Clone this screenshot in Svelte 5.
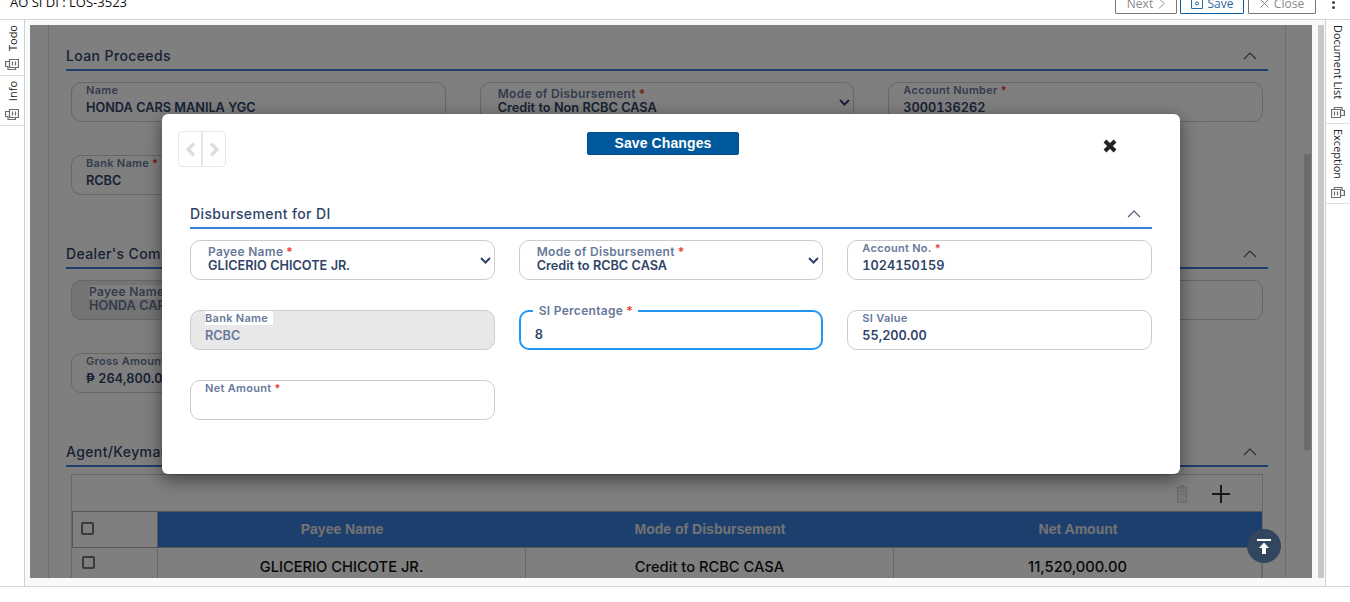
<script lang="ts">
  const loan = [
    { label: "Name", value: "HONDA CARS MANILA YGC" },
    { label: "Mode of Disbursement", value: "Credit to Non RCBC CASA", req: true, select: true },
    { label: "Account Number", value: "3000136262", req: true },
    { label: "Bank Name", value: "RCBC", req: true },
  ];
  const dealer = [
    { label: "Payee Name", value: "HONDA CARS MANILA YGC", req: true, select: true, disabled: true },
    { label: "Mode of Disbursement", value: "Credit to Non RCBC CASA", req: true, select: true },
    { label: "Account Number", value: "3000136262", req: true },
    { label: "Gross Amount", value: "₱ 264,800.00", req: true },
  ];
  const fields = [
    { label: "Payee Name", value: "GLICERIO CHICOTE JR.", req: true, select: true },
    { label: "Mode of Disbursement", value: "Credit to RCBC CASA", req: true, select: true },
    { label: "Account No.", value: "1024150159", req: true },
    { label: "Bank Name", value: "RCBC", disabled: true },
    { label: "SI Percentage", value: "8", req: true, focused: true },
    { label: "SI Value", value: "55,200.00" },
    { label: "Net Amount", value: "", req: true },
  ];
</script>

{#snippet docs()}
  <svg class="doc" width="14" height="13" viewBox="0 0 14 13" fill="none" stroke="currentColor" stroke-width="1.200">
    <path d="M4.500 1.500h9v8h-9z" />
    <path d="M7.500 3.500v4M10.500 3.500v4" />
    <path d="M4 3.500H.6v5H3v3h7.500v-2" />
  </svg>
{/snippet}

{#snippet chevron()}
  <svg class="collapse" width="14" height="8" viewBox="0 0 14 8" fill="none" stroke="currentColor" stroke-width="1.100">
    <path d="M1 7l6-6 6 6" />
  </svg>
{/snippet}

{#snippet field(f)}
  <div class="field" class:select={f.select} class:disabled={f.disabled} class:focused={f.focused}>
    <span class="label">{f.label}{#if f.req}<i>*</i>{/if}</span>
    <span class="value">{f.value}</span>
    {#if f.select}
      <svg class="caret" width="11" height="7" viewBox="0 0 11 7" fill="none" stroke="currentColor" stroke-width="2">
        <path d="M1 1l4.500 4.500L10 1" />
      </svg>
    {/if}
  </div>
{/snippet}

<div class="page">
  <header class="topbar">
    <h1>AO SI DI : LOS-3523</h1>
    <div class="actions">
      <button class="next">Next
        <svg width="7" height="11" viewBox="0 0 7 11" fill="none" stroke="currentColor"><path d="M1 .5l5 5-5 5" /></svg>
      </button>
      <button class="save">
        <svg width="12" height="12" viewBox="0 0 12 12" fill="none" stroke="currentColor">
          <path d="M.5.5h11v11H.5z" /><circle cx="6" cy="6.500" r="1.500" /><path d="M3.500.5v2h5v-2" />
        </svg>
        Save
      </button>
      <button class="close">
        <svg width="9" height="9" viewBox="0 0 9 9" fill="none" stroke="currentColor"><path d="M.5.5l8 8M8.500.5l-8 8" /></svg>
        Close
      </button>
      <span class="kebab"><b></b><b></b></span>
    </div>
  </header>

  <div class="body">
    <nav class="rail left">
      <div class="tab">
        <span>Todo</span>
        {@render docs()}
      </div>
      <div class="tab">
        <span>Info</span>
        {@render docs()}
      </div>
    </nav>

    <main class="main">
      <div class="viewport">
        <div class="card">
          <section>
            <div class="title"><h2>Loan Proceeds</h2>{@render chevron()}</div>
            <div class="grid">
              {#each loan as f}{@render field(f)}{/each}
            </div>
          </section>
          <section>
            <div class="title"><h2>Dealer's Commission</h2>{@render chevron()}</div>
            <div class="grid">
              {#each dealer as f}{@render field(f)}{/each}
            </div>
          </section>
          <section>
            <div class="title"><h2>Agent/Keyman</h2>{@render chevron()}</div>
            <div class="table">
              <div class="tools">
                <svg class="trash" width="12" height="18" viewBox="0 0 14 19" preserveAspectRatio="none" fill="currentColor">
                  <path d="M4.500 0h5v2H14v2H0V2h4.500zM1 5h12v14H1zM3.500 7v10h1.500V7zm2.750 0v10h1.500V7zm2.750 0v10h1.500V7z" fill-rule="evenodd" />
                </svg>
                <svg class="plus" width="18" height="18" viewBox="0 0 18 18" stroke="currentColor" stroke-width="2">
                  <path d="M9 0v18M0 9h18" />
                </svg>
              </div>
              <div class="row head">
                <div class="check"><span class="box"></span></div>
                <div>Payee Name</div>
                <div>Mode of Disbursement</div>
                <div>Net Amount</div>
              </div>
              <div class="row item">
                <div class="check"><span class="box"></span></div>
                <div>GLICERIO CHICOTE JR.</div>
                <div>Credit to RCBC CASA</div>
                <div>11,520,000.00</div>
              </div>
            </div>
          </section>
        </div>
      </div>
      <div class="scrollthumb"></div>

      <div class="backdrop">
        <div class="modal">
          <div class="modal-head">
            <div class="pager">
              <button aria-label="Previous">
                <svg width="11" height="15" viewBox="0 0 11 15" fill="none" stroke="currentColor" stroke-width="3.500"><path d="M9 1.500l-6 6 6 6" /></svg>
              </button>
              <button aria-label="Next">
                <svg width="11" height="15" viewBox="0 0 11 15" fill="none" stroke="currentColor" stroke-width="3.500"><path d="M2 1.500l6 6-6 6" /></svg>
              </button>
            </div>
            <button class="primary">Save Changes</button>
            <svg class="dismiss" width="14" height="14" viewBox="0 0 14 14" stroke="currentColor" stroke-width="4">
              <path d="M2 2l10 10M12 2L2 12" />
            </svg>
          </div>
          <div class="title modal-title"><h2>Disbursement for DI</h2>{@render chevron()}</div>
          <div class="grid modal-grid">
            {#each fields as f}{@render field(f)}{/each}
          </div>
        </div>
      </div>

      <button class="totop" aria-label="Back to top">
        <svg width="14" height="15" viewBox="0 0 14 15" fill="#fff">
          <path d="M0 0h14v2H0zM7 3.500l5 5.500H9v6H5V9H2z" />
        </svg>
      </button>
    </main>

    <div class="gutter"><div class="thumb"></div></div>

    <nav class="rail right">
      <div class="tab">
        <span>Document List</span>
        {@render docs()}
      </div>
      <div class="tab">
        <span>Exception</span>
        {@render docs()}
      </div>
    </nav>
  </div>
</div>

<style>
  :global(body) {
    margin: 0;
    background: #fff;
    overflow: hidden;
  }
  .page {
    height: 602px;
    font-family: Inter, "Liberation Sans", sans-serif;
    color: #2f4468;
  }
  button {
    font-family: inherit;
    background: none;
    padding: 0;
  }

  .topbar {
    height: 19px;
    border-bottom: 1px solid #d4d4d4;
    display: flex;
    justify-content: space-between;
    align-items: flex-end;
    padding: 0 0 0 10px;
    overflow: hidden;
  }
  h1 {
    margin: 0 0 7px;
    font: 400 13px/20px "Open Sans", sans-serif;
    color: #111;
  }
  .actions {
    display: flex;
    align-items: flex-end;
    margin-bottom: 5px;
  }
  .actions button {
    height: 22px;
    display: flex;
    align-items: center;
    justify-content: center;
    gap: 5px;
    border: 1px solid #777;
    border-radius: 1px;
    font: 400 12px "Open Sans", sans-serif;
    color: #8a8a8a;
  }
  .next { width: 62px; }
  .actions .save { width: 64px; margin-left: 3px; border-color: #0b5c9e; color: #2a6a9f; }
  .actions .close { width: 68px; margin-left: 4px; color: #888; }
  .kebab {
    width: 34px;
    display: flex;
    flex-direction: column;
    align-items: center;
    gap: 2px;
    margin-bottom: 5px;
  }
  .kebab b {
    width: 3px;
    height: 3px;
    border-radius: 50%;
    background: #444;
  }

  .body {
    display: flex;
    height: 566px;
    border-bottom: 1px solid #d4d4d4;
    background: #f8f9fb;
  }
  .rail {
    width: 24px;
    flex: none;
    background: #fff;
  }
  .rail.left { border-right: 1px solid #d0d0d0; }
  .rail.right { width: 24px; border-left: 1px solid #d0d0d0; }
  .tab {
    display: flex;
    flex-direction: column;
    align-items: center;
    gap: 7px;
    padding: 5px 0 4px;
    border-bottom: 1px solid #ddd;
    font: 400 11px "Open Sans", sans-serif;
    color: #222;
  }
  .tab span { writing-mode: vertical-rl; }
  .left .tab span { transform: rotate(180deg); }
  .doc { color: #6d6d6d; }
  .right .doc { transform: rotate(180deg); }

  .main {
    position: relative;
    flex: none;
    width: 1282px;
    margin: 5px 0 8px 5px;
    overflow: hidden;
  }
  .viewport {
    height: 100%;
    overflow: hidden;
    padding: 0 0 0 18px;
    background: #fff;
  }
  .card {
    width: 1202px;
    height: 100%;
    padding: 0 17px;
    border: solid #d8d8d8;
    border-width: 0 1px;
  }
  .scrollthumb {
    position: absolute;
    left: 1274px;
    top: 129px;
    width: 7px;
    height: 296px;
    background: #d6d6d6;
  }
  .gutter {
    width: 13px;
    flex: none;
    padding: 5px 1px 8px 6px;
    box-sizing: border-box;
  }
  .thumb {
    height: 100%;
    background: #c8c8c8;
  }

  section { padding-top: 19px; margin-bottom: 28px; }
  .title {
    display: flex;
    justify-content: space-between;
    align-items: center;
    height: 23px;
    padding: 0 11px 2px 0;
    border-bottom: 2px solid #3a7fd8;
    box-sizing: content-box;
  }
  h2 {
    margin: 0;
    font-size: 14px;
    font-weight: 500;
    letter-spacing: 0.38px;
    color: #2f4468;
  }
  .collapse { color: #4a5a78; }
  .grid {
    display: grid;
    grid-template-columns: repeat(3, 1fr);
    gap: 33px 34px;
    margin: 11px 5px 0;
  }

  .field {
    position: relative;
    height: 40px;
    box-sizing: border-box;
    border: 1px solid #ccc;
    border-radius: 10px;
    padding: 0 14px;
    display: flex;
    flex-direction: column;
    background: #fff;
  }
  .label {
    font-size: 11px;
    line-height: 14px;
    font-weight: 600;
    letter-spacing: 0.3px;
    color: #68799a;
    align-self: flex-start;
  }
  .label i {
    font-style: normal;
    color: #ee3b2f;
    margin-left: 3px;
  }
  .value {
    font-size: 12.700px;
    line-height: 16px;
    font-weight: 600;
    font-variant-numeric: tabular-nums;
    color: #2f4468;
    margin-top: 3px;
  }
  .select { padding: 4px 17px 0; }
  .select .value { margin-top: -1px; }
  .select .label { font-size: 12px; letter-spacing: 0.3px; }
  .caret {
    position: absolute;
    right: 3px;
    top: 16px;
    color: #2f4468;
  }
  .disabled { background: #e8e8e8; }
  .disabled .label { background: #fff; padding-right: 5px; }
  .disabled .value { color: #68799a; }
  .focused {
    border: 2px solid #2196f3;
    padding: 0 14px;
  }
  .focused .label {
    position: absolute;
    top: -8px;
    left: 12px;
    padding: 0 5px 0 6px;
    background: #fff;
    font-size: 12px;
    letter-spacing: 0.3px;
  }
  .focused .value { margin-top: 15px; }

  .table {
    margin: 7px 5px 0;
    border: solid #d0d0d0;
    border-width: 1px 1px 0;
  }
  .tools {
    height: 36px;
    display: flex;
    justify-content: flex-end;
    align-items: center;
    gap: 24px;
    padding: 2px 32px 0 0;
    box-sizing: border-box;
  }
  .trash { color: #ddd; }
  .plus { color: #333; }
  .row {
    display: grid;
    grid-template-columns: 86px 368px 368px 1fr;
    text-align: center;
  }
  .row > div {
    display: flex;
    justify-content: center;
    align-items: center;
    border-right: 1px solid #d0d0d0;
  }
  .head {
    height: 35px;
    grid-template-columns: 85px 368px 368px 1fr;
    border: solid #b0b0b0;
    border-width: 1px 0 1px 1px;
    font: 700 14px "Liberation Sans", sans-serif;
    color: #e6e6e6;
  }
  .head > div { background: #3a7fdc; border-right: 0; padding-bottom: 2px; }
  .head .check { background: #fff; border-right: 1px solid #b0b0b0; justify-content: flex-start; padding: 0 0 3px 8px; }
  .item {
    height: 38px;
    font-size: 14.700px;
    font-weight: 500;
    color: #111;
  }
  .item .check { justify-content: flex-start; padding: 0 0 10px 10px; }
  .box {
    width: 9px;
    height: 9px;
    border: 2px solid #777;
    border-radius: 2px;
    background: #fff;
  }

  .backdrop {
    position: absolute;
    inset: 0;
    background: rgba(0, 0, 0, 0.5);
    display: flex;
    justify-content: center;
    padding-top: 89px;
    box-sizing: border-box;
  }
  .modal {
    width: 1018px;
    height: 360px;
    box-sizing: border-box;
    background: #fff;
    border-radius: 6px;
    padding: 17px 28px 0;
    box-shadow: 0 5px 18px rgba(0, 0, 0, 0.5);
  }
  .modal-head {
    display: flex;
    justify-content: center;
    position: relative;
    height: 71px;
  }
  .pager {
    position: absolute;
    left: -12px;
    top: 0;
    display: flex;
    width: 48px;
    height: 36px;
    border: 1px solid #e6e6e6;
    border-radius: 4px;
    box-sizing: border-box;
    color: #dedede;
  }
  .pager button {
    flex: 1;
    display: flex;
    align-items: center;
    justify-content: center;
    border: 0;
    color: inherit;
  }
  .pager button + button { border-left: 2px solid #e6e6e6; }
  .primary {
    width: 152px;
    height: 23px;
    margin: 1px 0 0 -16px;
    padding-bottom: 2px;
    border: 1px solid #004f8c;
    border-radius: 2px;
    background: #00599c;
    color: #fff;
    font: 700 14px "Liberation Sans", sans-serif;
    letter-spacing: 0.1px;
  }
  .dismiss {
    position: absolute;
    right: 35px;
    top: 8px;
    color: #222;
  }
  .modal-grid {
    gap: 30px 24px;
    margin: 11px 0 0;
  }

  .totop {
    position: absolute;
    left: 1217px;
    top: 504px;
    width: 34px;
    height: 34px;
    border: 0;
    border-radius: 50%;
    background: #33465f;
    display: flex;
    align-items: center;
    justify-content: center;
  }
</style>
